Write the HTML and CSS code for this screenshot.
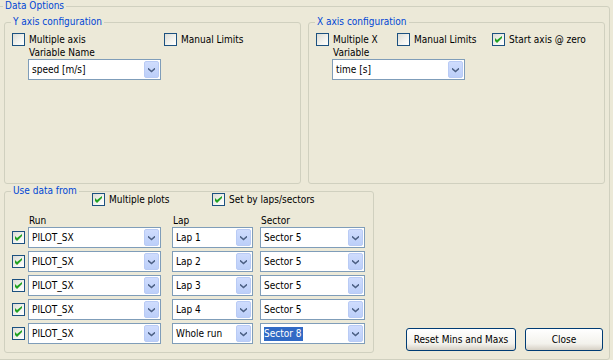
FILE: index.html
```html
<!DOCTYPE html>
<html lang="en">
<head>
    <meta charset="UTF-8">
    <meta name="viewport" content="width=device-width, initial-scale=1.0">
    <title>Data Options</title>
    <link rel="stylesheet" href="styles.css">
</head>
<body>
    <fieldset class="group outer">
        <legend>Data Options</legend>

        <div class="top-row">
            <fieldset class="group">
                <legend>Y axis configuration</legend>
                <div class="checks">
                    <label class="check w-152"><span class="box"></span>Multiple axis</label>
                    <label class="check"><span class="box"></span>Manual Limits</label>
                </div>
                <div class="field">
                    <div class="field-label">Variable Name</div>
                    <div class="combo w-133"><span class="combo-text">speed [m/s]</span><span class="drop"></span></div>
                </div>
            </fieldset>

            <fieldset class="group">
                <legend>X axis configuration</legend>
                <div class="checks">
                    <label class="check w-81"><span class="box"></span>Multiple X</label>
                    <label class="check w-95"><span class="box"></span>Manual Limits</label>
                    <label class="check"><span class="box checked"></span>Start axis @ zero</label>
                </div>
                <div class="field">
                    <div class="field-label">Variable</div>
                    <div class="combo w-133"><span class="combo-text">time [s]</span><span class="drop"></span></div>
                </div>
            </fieldset>
        </div>

        <div class="bottom-row">
            <fieldset class="group use-group">
                <legend>Use data from</legend>
                <div class="checks use-checks">
                    <label class="check w-120"><span class="box checked"></span>Multiple plots</label>
                    <label class="check"><span class="box checked"></span>Set by laps/sectors</label>
                </div>

                <div class="col-heads">
                    <span class="head-run">Run</span>
                    <span class="head-lap">Lap</span>
                    <span>Sector</span>
                </div>

                <div class="run-row">
                    <span class="box checked"></span>
                    <div class="combo w-133"><span class="combo-text">PILOT_SX</span><span class="drop"></span></div>
                    <div class="combo w-81 lap"><span class="combo-text">Lap 1</span><span class="drop"></span></div>
                    <div class="combo w-105 sector"><span class="combo-text">Sector 5</span><span class="drop"></span></div>
                </div>
                <div class="run-row">
                    <span class="box checked"></span>
                    <div class="combo w-133"><span class="combo-text">PILOT_SX</span><span class="drop"></span></div>
                    <div class="combo w-81 lap"><span class="combo-text">Lap 2</span><span class="drop"></span></div>
                    <div class="combo w-105 sector"><span class="combo-text">Sector 5</span><span class="drop"></span></div>
                </div>
                <div class="run-row">
                    <span class="box checked"></span>
                    <div class="combo w-133"><span class="combo-text">PILOT_SX</span><span class="drop"></span></div>
                    <div class="combo w-81 lap"><span class="combo-text">Lap 3</span><span class="drop"></span></div>
                    <div class="combo w-105 sector"><span class="combo-text">Sector 5</span><span class="drop"></span></div>
                </div>
                <div class="run-row">
                    <span class="box checked"></span>
                    <div class="combo w-133"><span class="combo-text">PILOT_SX</span><span class="drop"></span></div>
                    <div class="combo w-81 lap"><span class="combo-text">Lap 4</span><span class="drop"></span></div>
                    <div class="combo w-105 sector"><span class="combo-text">Sector 5</span><span class="drop"></span></div>
                </div>
                <div class="run-row">
                    <span class="box checked"></span>
                    <div class="combo w-133"><span class="combo-text">PILOT_SX</span><span class="drop"></span></div>
                    <div class="combo w-81 lap"><span class="combo-text">Whole run</span><span class="drop"></span></div>
                    <div class="combo w-105 sector"><span class="combo-text"><span class="selected">Sector 8</span></span><span class="drop"></span></div>
                </div>
            </fieldset>

            <div class="actions">
                <button type="button" class="btn btn-reset">Reset Mins and Maxs</button>
                <button type="button" class="btn btn-close">Close</button>
            </div>
        </div>
    </fieldset>
</body>
</html>
```

FILE: styles.css
```css
/* XP style "Data Options" dialog */
body {
    margin: 0;
    background-color: #ece9d8; /* classic dialog face */
    font-family: "DejaVu Sans Condensed", "Liberation Sans", sans-serif;
    font-size: 10px;
    color: #000000;
    overflow: hidden;
}

/* Group boxes */
.group {
    margin: 0;
    padding: 0 0 0 7px;
    border: 1px solid #d0d0bf;
    border-radius: 3px;
    min-width: 0;
    box-sizing: border-box;
}

.group > legend {
    color: #0046d5;
    padding: 0 2px;
    margin-left: -1px;
    line-height: 12px;
}

.outer {
    margin: 0 3px 0 -4px;
    padding: 4px 4px 6px 7px;
    height: 360px;
}

.top-row {
    display: grid;
    grid-template-columns: 1fr 1fr;
    gap: 7px;
}

.top-row > .group {
    height: 168px;
}

.bottom-row {
    display: flex;
    align-items: flex-end;
    margin-top: 1px;
}

.use-group {
    width: 370px;
    height: 168px;
}

/* Checkboxes */
.checks {
    display: flex;
    margin-top: 5px;
}

.use-checks {
    margin-top: -4px;
    padding-left: 80px;
}

.check {
    display: flex;
    align-items: center;
    gap: 4px;
    height: 13px;
    line-height: 13px;
    white-space: nowrap;
}

.w-81 { width: 81px; }
.w-95 { width: 95px; }
.w-105 { width: 105px; }
.w-120 { width: 120px; }
.w-133 { width: 133px; }
.w-152 { width: 152px; }

.box {
    position: relative;
    flex: none;
    width: 13px;
    height: 13px;
    box-sizing: border-box;
    border: 1px solid #1c5180;
    background: linear-gradient(135deg, #dcdcd5, #f4f4f0 60%, #ffffff);
}

.box.checked::after {
    content: "";
    position: absolute;
    left: 2px;
    top: 2px;
    width: 7px;
    height: 7px;
    background-color: #21a121; /* green tick */
    clip-path: polygon(0 2px, 2px 4px, 7px 0, 7px 2px, 2px 7px, 0 5px);
}

/* Labelled combo fields */
.field {
    margin-left: 16px;
}

.field-label {
    line-height: 13px;
    padding-left: 1px;
}

.combo {
    display: flex;
    align-items: center;
    height: 21px;
    box-sizing: border-box;
    border: 1px solid #7f9db9;
    background-color: #ffffff;
    padding: 1px;
}

.combo-text {
    flex: 1;
    padding-left: 2px;
    line-height: 15px;
    white-space: nowrap;
}

.combo-text .selected {
    background-color: #316ac5;
    color: #ffffff;
    padding: 1px 1px 2px 0;
}

.drop {
    display: flex;
    align-items: center;
    justify-content: center;
    flex: none;
    width: 15px;
    height: 17px;
    box-sizing: border-box;
    border: 1px solid #b9cbf5;
    border-radius: 2px;
    background: linear-gradient(#cfdcfd, #bccff9);
}

.drop::after {
    content: "";
    width: 7px;
    height: 5px;
    margin-top: 1px;
    background-color: #4d6185;
    clip-path: polygon(0 0, 50% 3px, 100% 0, 100% 2px, 50% 5px, 0 2px);
}

/* Runs table */
.col-heads {
    display: flex;
    margin-top: 9px;
    padding-left: 17px;
    line-height: 12px;
}

.head-run { width: 144px; }
.head-lap { width: 88px; }

.run-row {
    display: flex;
    align-items: center;
    margin-top: 3px;
}

.col-heads + .run-row {
    margin-top: 0;
}

.run-row .box {
    margin-right: 3px;
}

.lap { margin-left: 11px; }
.sector { margin-left: 7px; }

/* Buttons */
.actions {
    display: flex;
    gap: 9px;
    margin-left: auto;
    margin-right: 2px;
    margin-bottom: 2px;
}

.btn {
    height: 23px;
    padding: 0;
    border: 1px solid #003c74;
    border-radius: 3px;
    background: linear-gradient(#ffffff, #f3f2ec 70%, #d6d0c5);
    font: inherit;
    color: #000000;
}

.btn-reset { width: 110px; }
.btn-close { width: 78px; }
```
